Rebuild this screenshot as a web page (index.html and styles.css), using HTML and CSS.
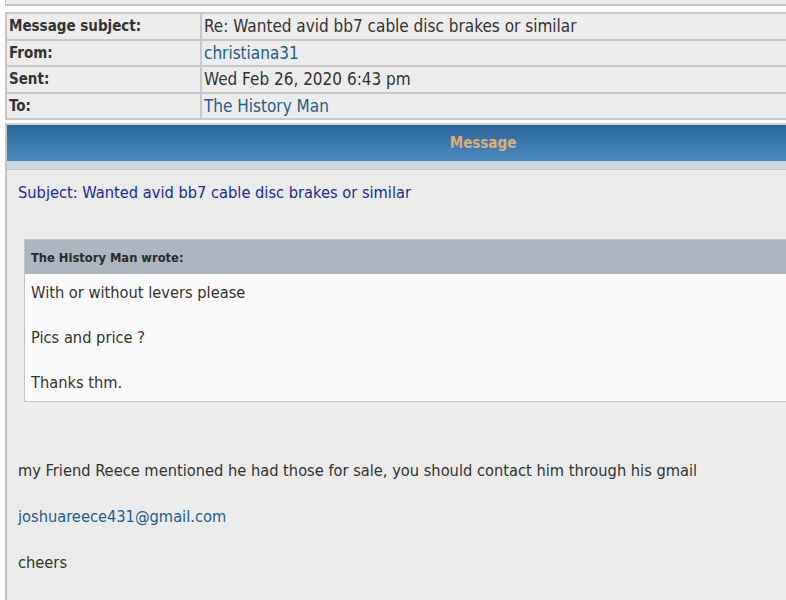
FILE: index.html
```html
<!DOCTYPE html>
<html lang="en">
<head>
    <meta charset="UTF-8">
    <meta name="viewport" content="width=device-width, initial-scale=1.0">
    <title>Private message</title>
    <link rel="stylesheet" href="styles.css">
</head>
<body>
    <div class="top-strip"></div>

    <table class="pm-info">
        <tr>
            <th>Message subject:</th>
            <td>Re: Wanted avid bb7 cable disc brakes or similar</td>
        </tr>
        <tr>
            <th>From:</th>
            <td><a href="#">christiana31</a></td>
        </tr>
        <tr>
            <th>Sent:</th>
            <td>Wed Feb 26, 2020 6:43 pm</td>
        </tr>
        <tr>
            <th>To:</th>
            <td><a href="#">The History Man</a></td>
        </tr>
    </table>

    <div class="pm-panel">
        <div class="panel-head">Message</div>
        <div class="panel-sub"></div>
        <div class="panel-body">
            <div class="post-subject">Subject: Wanted avid bb7 cable disc brakes or similar</div>

            <div class="quote">
                <div class="quote-head">The History Man wrote:</div>
                <div class="quote-body">
                    With or without levers please<br><br>
                    Pics and price ?<br><br>
                    Thanks thm.
                </div>
            </div>

            <div class="post-text">
                my Friend Reece mentioned he had those for sale, you should contact him through his gmail<br><br>
                <a href="#">joshuareece431@gmail.com</a><br><br>
                cheers
            </div>
        </div>
    </div>
</body>
</html>
```

FILE: styles.css
```css
body {
    margin: 0;
    background: #fff;
    font-family: "DejaVu Sans Condensed", "DejaVu Sans", sans-serif;
    color: #333;
    overflow: hidden;
}
a {
    color: #1f5d86;
    text-decoration: none;
}
.top-strip {
    margin-left: 5px;
    height: 4px;
    width: 950px;
    background: #ececec;
    border-left: 1px solid #c4c4c4;
    border-bottom: 2px solid #c4c4c4;
}
.pm-info {
    margin: 6px 0 0 5px;
    width: 952px;
    border-collapse: collapse;
    background: #ececec;
    border: 2px solid #c8c8c8;
    font-size: 17px;
}
.pm-info th,
.pm-info td {
    border: 2px solid #c8c8c8;
    height: 24.6px;
    padding: 0 3px;
    text-align: left;
    vertical-align: middle;
}
.pm-info th {
    width: 188px;
    padding-left: 2px;
    font-size: 15px;
    font-weight: bold;
    color: #333;
}
.pm-info td {
    padding-left: 2px;
}
.pm-panel {
    margin: 3px 0 0 5px;
    width: 952px;
    background: #ebebeb;
    border-left: 2px solid #c4c4c4;
    border-top: 2px solid #c6ccd2;
}
.panel-head {
    height: 36px;
    line-height: 37px;
    text-align: center;
    font-size: 15px;
    font-weight: bold;
    color: #dcae74;
    background: linear-gradient(#2c6598, #4a8cc0);
}
.panel-sub {
    height: 8px;
    background: #cfd5db;
    border-bottom: 1px solid #c4c8cc;
}
.panel-body {
    padding: 12px 0 40px 11px;
    font-size: 16.3px;
}
.post-subject {
    color: #1a2a8a;
    line-height: 22px;
}
.quote {
    margin: 35px 0 0 6px;
    border: 1px solid #c0c4c8;
}
.quote-head {
    height: 34px;
    line-height: 36px;
    padding-left: 6px;
    background: #abb6c1;
    font-size: 12.8px;
    font-weight: bold;
    color: #2a2a2a;
}
.quote-body {
    background: #fafafa;
    padding: 8px 6px 6px;
    line-height: 22.5px;
}
.post-text {
    margin-top: 57px;
    line-height: 23px;
}
```
